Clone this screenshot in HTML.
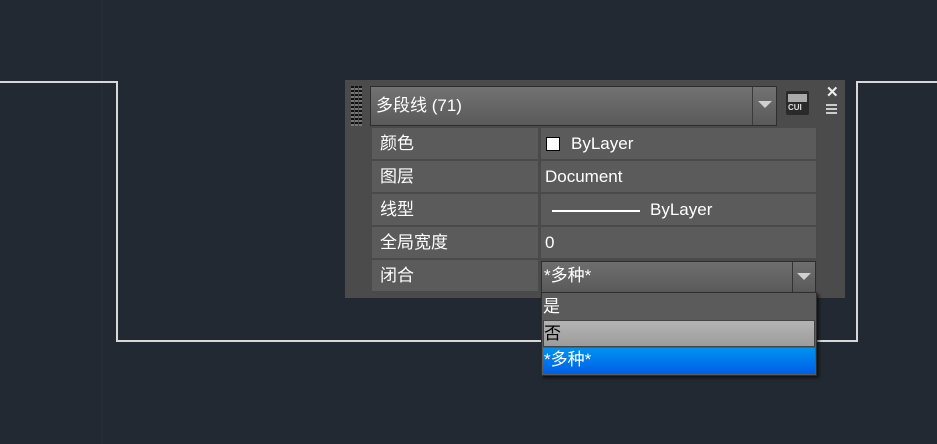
<!DOCTYPE html>
<html><head><meta charset="utf-8"><style>
*{margin:0;padding:0;box-sizing:border-box}
body{width:937px;height:444px;background:#222932;position:relative;overflow:hidden;font-family:"Liberation Sans","Noto Sans CJK SC",sans-serif;font-size:17px;color:#fff}
.a{position:absolute}
.l{background:#d8d8d8}
.cell{position:absolute;background:#5b5b5b;line-height:32px;padding-left:8px}
</style></head><body>
<div class="a" style="left:101px;top:0;width:2px;height:444px;background:#242c36"></div>
<div class="a l" style="left:0;top:81px;width:118px;height:2px"></div>
<div class="a l" style="left:116px;top:81px;width:2px;height:261px"></div>
<div class="a l" style="left:116px;top:340px;width:742px;height:2px"></div>
<div class="a l" style="left:856px;top:81px;width:2px;height:261px"></div>
<div class="a l" style="left:856px;top:81px;width:81px;height:2px"></div>

<div class="a" style="left:345px;top:80px;width:500px;height:218px;background:#4b4b4b"></div>
<div class="a" style="left:351px;top:86px;width:11px;height:40px;background:repeating-linear-gradient(#111 0 2px,#777 2px 4px);-webkit-mask:repeating-linear-gradient(90deg,#000 0 3px,transparent 3px 4px)"></div>
<div class="a" style="left:370px;top:86px;width:407px;height:40px;background:linear-gradient(#727272,#5a5a5a);border:1px solid #2e2e2e;line-height:37px;padding-left:5px">多段线 (71)</div>
<div class="a" style="left:752px;top:87px;width:1px;height:38px;background:#3a3a3a"></div>
<div class="a" style="left:758px;top:101px;width:0;height:0;border-left:7px solid transparent;border-right:7px solid transparent;border-top:7px solid #d0d0d0"></div>
<div class="a" style="left:786px;top:91px;width:23px;height:24px;background:#2a2a2a;border-radius:2px"></div>
<div class="a" style="left:788px;top:94px;width:19px;height:8px;background:#aaa"></div>
<div class="a" style="left:788px;top:103px;font-size:8px;font-weight:bold;color:#ddd;line-height:10px">CUI</div>
<div class="a" style="left:826px;top:83px;font-size:15px;font-weight:bold;color:#eee">✕</div>
<div class="a" style="left:826px;top:104px;width:11px;height:12px;background:repeating-linear-gradient(#ccc 0 2px,transparent 2px 4px)"></div>

<div class="a" style="left:371px;top:127px;width:446px;height:167px;background:#4a4a4a"></div>
<div class="cell" style="left:372px;top:128px;width:166px;height:31px">颜色</div>
<div class="cell" style="left:541px;top:128px;width:275px;height:31px;padding-left:30px">ByLayer</div>
<div class="a" style="left:546px;top:137px;width:14px;height:14px;background:#fff;border:1px solid #000"></div>
<div class="cell" style="left:372px;top:161px;width:166px;height:31px">图层</div>
<div class="cell" style="left:541px;top:161px;width:275px;height:31px;padding-left:4px">Document</div>
<div class="cell" style="left:372px;top:194px;width:166px;height:31px">线型</div>
<div class="cell" style="left:541px;top:194px;width:275px;height:31px;padding-left:109px">ByLayer</div>
<div class="a" style="left:552px;top:210px;width:88px;height:2px;background:#fff"></div>
<div class="cell" style="left:372px;top:227px;width:166px;height:31px">全局宽度</div>
<div class="cell" style="left:541px;top:227px;width:275px;height:31px;padding-left:4px">0</div>
<div class="cell" style="left:372px;top:260px;width:166px;height:31px">闭合</div>
<div class="a" style="left:541px;top:261px;width:275px;height:32px;background:linear-gradient(#6e6e6e,#5a5a5a);border:1px solid #2e2e2e;line-height:28px;padding-left:2px">*多种*</div>
<div class="a" style="left:792px;top:262px;width:1px;height:30px;background:#333"></div>
<div class="a" style="left:797px;top:273px;width:0;height:0;border-left:7px solid transparent;border-right:7px solid transparent;border-top:7px solid #d0d0d0"></div>

<div class="a" style="left:541px;top:292px;width:276px;height:84px;background:#5b5b5b;border:1px solid #2e2e2e;box-shadow:2px 2px 3px rgba(0,0,0,.6)"></div>
<div class="a" style="left:543px;top:293px;line-height:27px">是</div>
<div class="a" style="left:543px;top:320px;width:272px;height:27px;background:linear-gradient(#b4b4b4,#9c9c9c);border:1px solid #444;color:#000;line-height:25px">否</div>
<div class="a" style="left:543px;top:348px;width:272px;height:26px;background:linear-gradient(#0092f2,#005ee6);line-height:24px;padding-left:1px">*多种*</div>
</body></html>
